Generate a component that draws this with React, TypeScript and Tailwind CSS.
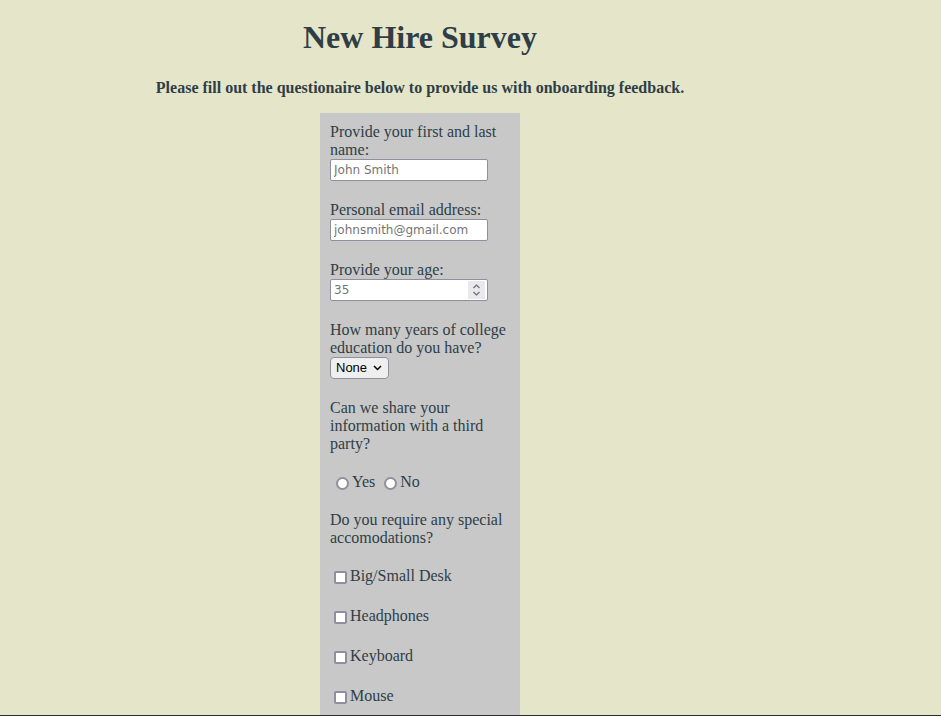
import { useState } from "react";

const serif = "font-['Liberation_Serif','Times_New_Roman',serif]";
const field =
  "block h-[22px] w-[158px] rounded-[2px] border border-[#8f8f9d] bg-white px-[3px] font-['DejaVu_Sans',Verdana,sans-serif] text-[12px] text-[#2f3e46] placeholder:text-[#757575] outline-none";
const box = "h-[13px] w-[13px] shrink-0 appearance-none border-2 border-[#8f8f9d] bg-white checked:bg-[#0075ff] checked:border-[#0075ff]";

const EXTRAS = ["Big/Small Desk", "Headphones", "Keyboard", "Mouse"];

export default function App() {
  const [share, setShare] = useState("");
  const [age, setAge] = useState("");

  return (
    <div
      className={`h-screen overflow-hidden border-b border-[#2b2f2b] bg-[#e5e6c9] text-[#2f3e46] ${serif}`}
    >
      <div className="w-[840px] text-center">
        <h1 className="mt-[19px] text-[32px] font-bold leading-[37px]">New Hire Survey</h1>
        <h4 className="mt-[23px] text-[16px] font-bold leading-[18px]">
          Please fill out the questionaire below to provide us with onboarding feedback.
        </h4>

        {/* Survey panel */}
        <form className="mx-auto mt-[16px] w-[200px] bg-[#c8c8c8] px-[10px] pb-[40px] pt-[10px] text-left text-[16px] leading-[18px]">
          <label htmlFor="name" className="block">
            Provide your first and last name:
          </label>
          <input id="name" type="text" placeholder="John Smith" className={field} />

          <label htmlFor="email" className="mt-[20px] block">
            Personal email address:
          </label>
          <input id="email" type="email" placeholder="johnsmith@gmail.com" className={field} />

          <label htmlFor="age" className="mt-[20px] block">
            Provide your age:
          </label>
          <div className="flex h-[22px] w-[158px] items-center rounded-[2px] border border-[#8f8f9d] bg-white pr-[2px]">
            <input
              id="age"
              type="text"
              value={age}
              onChange={(e) => setAge(e.target.value)}
              placeholder="35"
              className="h-full min-w-0 flex-1 px-[3px] font-['DejaVu_Sans',Verdana,sans-serif] text-[12px] placeholder:text-[#757575] outline-none"
            />
            <div className="flex h-[18px] w-[17px] flex-col items-center justify-center bg-[#e9e9ed]">
              <svg width="9" height="14" viewBox="0 0 9 14" fill="none" stroke="#6d6d75" strokeWidth="1.2">
                <path d="M1.5 5 4.5 2 7.5 5" />
                <path d="M1.5 9 4.5 12 7.5 9" />
              </svg>
            </div>
          </div>

          <label htmlFor="college" className="mt-[20px] block">
            How many years of college education do you have?
          </label>
          <div className="relative w-[59px]">
            <select
              id="college"
              defaultValue="none"
              className="block h-[22px] w-[59px] appearance-none rounded-[4px] border border-[#8f8f9d] bg-[#efefef] pl-[5px] font-['Liberation_Sans',Arial,sans-serif] text-[13px] text-black outline-none"
            >
              <option value="none">None</option>
              <option value="1">1</option>
              <option value="2">2</option>
              <option value="3">3</option>
              <option value="4">4+</option>
            </select>
            <svg
              className="pointer-events-none absolute right-[7px] top-[8px]"
              width="9"
              height="6"
              viewBox="0 0 9 6"
              fill="none"
              stroke="#000"
              strokeWidth="1.5"
            >
              <path d="M1 1l3.5 3.5L8 1" />
            </svg>
          </div>

          <p className="mt-[20px]">Can we share your information with a third party?</p>
          <div className="mt-[20px] flex h-[18px] items-start">
            <input
              type="radio"
              id="yes"
              name="share"
              checked={share === "yes"}
              onChange={() => setShare("yes")}
              className={`${box} ml-[6px] mr-[3px] mt-[4px] rounded-full`}
            />
            <label htmlFor="yes">Yes</label>
            <input
              type="radio"
              id="no"
              name="share"
              checked={share === "no"}
              onChange={() => setShare("no")}
              className={`${box} ml-[9px] mr-[3px] mt-[4px] rounded-full`}
            />
            <label htmlFor="no">No</label>
          </div>

          <p className="mt-[20px]">Do you require any special accomodations?</p>
          <div className="mt-[20px] flex flex-col gap-[22px]">
            {EXTRAS.map((item) => (
              <div key={item} className="flex h-[18px] items-start">
                <input
                  type="checkbox"
                  id={item}
                  className={`${box} ml-[4px] mr-[3px] mt-[4px] rounded-[2px]`}
                />
                <label htmlFor={item}>{item}</label>
              </div>
            ))}
          </div>
        </form>
      </div>
    </div>
  );
}
